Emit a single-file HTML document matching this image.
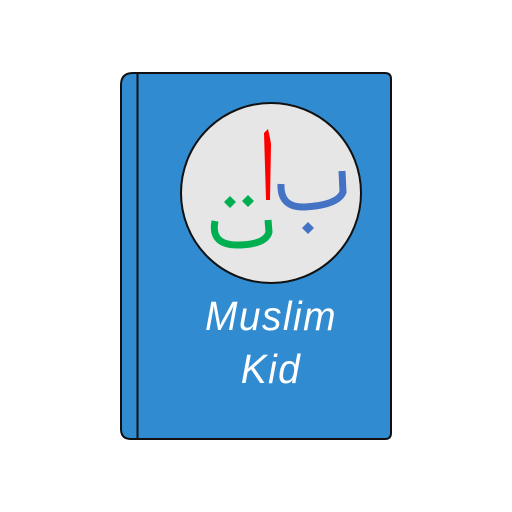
<!DOCTYPE html>
<html><head><style>
body{margin:0;background:#fff;width:512px;height:512px;overflow:hidden;position:relative}
.t{position:absolute;left:121px;width:300px;text-align:center;color:#fff;font-family:"Liberation Sans","DejaVu Sans",sans-serif;font-style:italic;font-size:41px;letter-spacing:1.5px;transform:scaleX(0.95)}
</style></head><body>
<svg width="512" height="512" style="position:absolute;left:0;top:0">
<path d="M133,73 H385 Q391,73 391,79 V433 Q391,439 385,439 H131 Q121,439 121,429 V85 Q121,73 133,73 Z" fill="#318bd0" stroke="#111" stroke-width="2"/>
<line x1="137.5" y1="73" x2="137.5" y2="439" stroke="#111" stroke-width="2"/>
<circle cx="271" cy="193" r="90" fill="#e6e6e6" stroke="#111" stroke-width="2"/>
<path d="M264,133 L268,129 L270,138 L271,144 L270,200 L266,200 Z" fill="#f00"/>
<path d="M281,184 Q280,208 305,207 Q338,205 343,192 L342,171" fill="none" stroke="#4472c4" stroke-width="7"/>
<path d="M308,222 L314,228 L308,234 L302,228 Z" fill="#4472c4"/>
<path d="M215,221 Q210,246 240,245 Q266,244 269,232 L268,220" fill="none" stroke="#00b050" stroke-width="7"/>
<path d="M230,196 L236,202 L230,208 L224,202 Z M248,195 L254,201 L248,207 L242,201 Z" fill="#00b050"/>
</svg>
<div class="t" style="top:293px">Muslim</div>
<div class="t" style="top:346px">Kid</div>
</body></html>
